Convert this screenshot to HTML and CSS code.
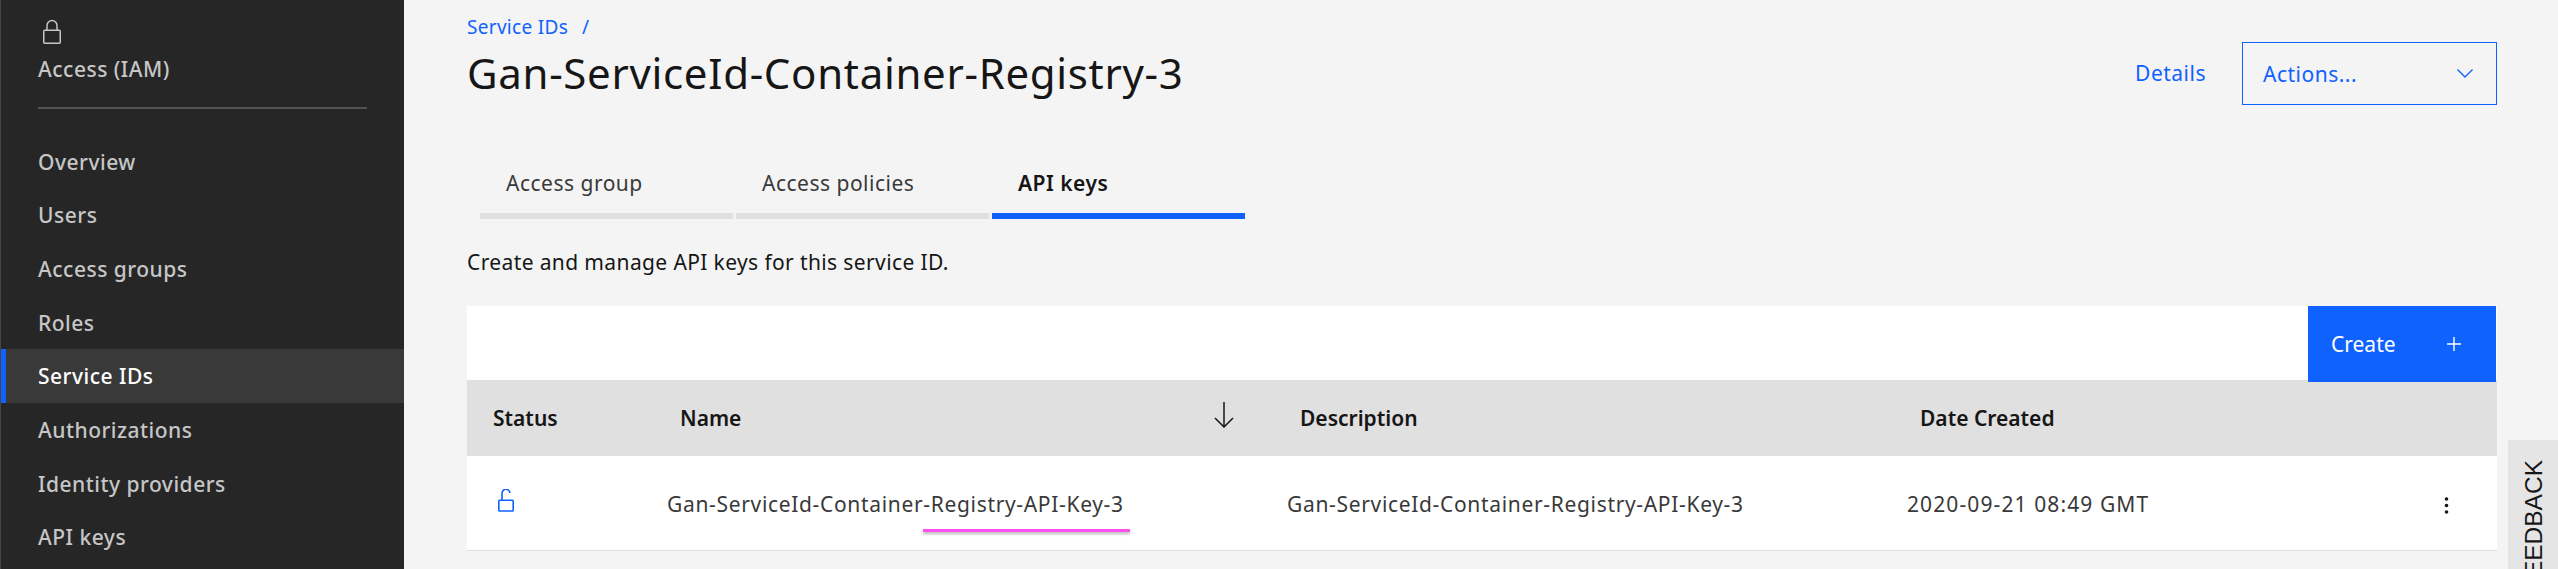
FILE: index.html
```html
<!DOCTYPE html>
<html>
<head>
	<meta charset="UTF-8">
	<title>Gan-ServiceId-Container-Registry-3</title>
	<link rel="stylesheet" href="styles.css">
</head>
<body>
<div id="page">
	<aside class="side">
		<div class="side-head">
			<svg class="side-lock" width="18" height="25" viewBox="0 0 18 25">
				<path d="M4 11V6.5a5 5 0 0 1 10 0V11" fill="none" stroke="#c6c6c6" stroke-width="1.5"/>
				<rect x="0.75" y="11.25" width="16.5" height="13" rx="1" fill="none" stroke="#c6c6c6" stroke-width="1.5"/>
			</svg>
			<div class="side-title">Access (IAM)</div>
		</div>
		<ul class="side-nav">
			<li><a href="javascript:;">Overview</a></li>
			<li><a href="javascript:;">Users</a></li>
			<li><a href="javascript:;">Access groups</a></li>
			<li><a href="javascript:;">Roles</a></li>
			<li class="select"><a href="javascript:;">Service IDs</a></li>
			<li><a href="javascript:;">Authorizations</a></li>
			<li><a href="javascript:;">Identity providers</a></li>
			<li><a href="javascript:;">API keys</a></li>
		</ul>
	</aside>

	<main class="main">
		<div class="head">
			<div class="head-left">
				<div class="crumb"><a href="javascript:;">Service IDs</a><span class="crumb-sep">/</span></div>
				<h1 class="title">Gan-ServiceId-Container-Registry-3</h1>
			</div>
			<div class="head-right">
				<a class="details" href="javascript:;">Details</a>
				<div class="actions">
					<span>Actions...</span>
					<svg width="16" height="9" viewBox="0 0 16 9"><path d="M0.5 0.5L8 8l7.5-7.5" fill="none" stroke="#0f62fe" stroke-width="1.4"/></svg>
				</div>
			</div>
		</div>

		<ul class="tabs">
			<li><a href="javascript:;">Access group</a></li>
			<li><a href="javascript:;">Access policies</a></li>
			<li class="on"><a href="javascript:;">API keys</a></li>
		</ul>

		<p class="intro">Create and manage API keys for this service ID.</p>

		<div class="toolbar">
			<a class="create" href="javascript:;">
				<span>Create</span>
				<svg width="14" height="14" viewBox="0 0 14 14"><path d="M7 0v14M0 7h14" stroke="#fff" stroke-width="1.4"/></svg>
			</a>
		</div>

		<div class="row row-head">
			<div class="cell">Status</div>
			<div class="cell cell-sort">Name
				<svg class="sort" width="20" height="26" viewBox="0 0 20 26"><path d="M10 0v25M1 16l9 9 9-9" fill="none" stroke="#161616" stroke-width="1.5"/></svg>
			</div>
			<div class="cell">Description</div>
			<div class="cell">Date Created</div>
			<div class="cell"></div>
		</div>
		<div class="row row-body">
			<div class="cell">
				<svg class="open-lock" width="16" height="23" viewBox="0 0 16 23">
					<path d="M4 11V4.5a4 4 0 0 1 8 -0.5" fill="none" stroke="#0f62fe" stroke-width="1.6"/>
					<rect x="0.8" y="11.3" width="14.4" height="10.7" rx="0.8" fill="none" stroke="#0f62fe" stroke-width="1.6"/>
				</svg>
			</div>
			<div class="cell cell-text">Gan-ServiceId-Container-Registry-API-Key-3</div>
			<div class="cell cell-text">Gan-ServiceId-Container-Registry-API-Key-3</div>
			<div class="cell cell-text cell-date">2020-09-21 08:49 GMT</div>
			<div class="cell cell-more">
				<svg width="5" height="17" viewBox="0 0 5 17"><circle cx="2.5" cy="2" r="1.8" fill="#161616"/><circle cx="2.5" cy="8.5" r="1.8" fill="#161616"/><circle cx="2.5" cy="15" r="1.8" fill="#161616"/></svg>
			</div>
		</div>
	</main>

	<div class="mark"></div>
	<div class="feedback"><span>FEEDBACK</span></div>
</div>
</body>
</html>
```

FILE: styles.css
```css
html, body{
	margin: 0;
	padding: 0;
	height: 569px;
	overflow: hidden;
}
body{
	background-color: #f4f4f4;
	color: #161616;
	font-family: "Noto Sans", "Liberation Sans", sans-serif;
}
ul{
	margin: 0;
	padding: 0;
	list-style: none;
}
a{
	text-decoration: none;
	color: inherit;
}
#page{
	position: relative;
	display: flex;
	height: 569px;
	overflow: hidden;
}

/* sidebar */
.side{
	flex: none;
	box-sizing: border-box;
	width: 404px;
	height: 569px;
	background-color: #262626;
	border-left: 1px solid #444;
	color: #c6c6c6;
	font-size: 21px;
	font-weight: 500;
	letter-spacing: 0.5px;
}
.side-head{
	box-sizing: border-box;
	height: 108.5px;
	margin: 0 37px;
	padding-top: 19px;
	border-bottom: 2px solid #525252;
}
.side-lock{
	display: block;
	margin-left: 5px;
}
.side-title{
	margin-top: 12px;
	line-height: 26px;
}
.side-nav{
	margin-top: 26px;
}
.side-nav li{
	height: 53.7px;
	line-height: 55px;
	padding-left: 37px;
}
.side-nav .select{
	padding-left: 32px;
	border-left: 5px solid #0f62fe;
	background-color: #393939;
	color: #fff;
}

/* main */
.main{
	flex: 1;
	min-width: 0;
	padding: 0 61px 0 63px;
}
.head{
	display: flex;
	justify-content: space-between;
	height: 106px;
}
.crumb{
	padding-top: 14px;
	line-height: 26px;
	font-size: 19px;
	letter-spacing: 0.3px;
	color: #0f62fe;
}
.crumb-sep{
	margin-left: 14px;
}
.title{
	margin: 6px 0 0;
	font-size: 42px;
	font-weight: 400;
	letter-spacing: 0.68px;
	line-height: 54px;
	white-space: nowrap;
}
.head-right{
	display: flex;
	align-items: flex-start;
	padding-top: 42px;
	color: #0f62fe;
	font-size: 21px;
	letter-spacing: 0.5px;
}
.details{
	margin-right: 36px;
	line-height: 63px;
}
.actions{
	display: flex;
	align-items: center;
	justify-content: space-between;
	box-sizing: border-box;
	width: 255px;
	height: 63px;
	padding: 0 23px 0 20px;
	border: 1px solid #0f62fe;
}

.tabs{
	display: flex;
	gap: 3.4px;
	margin: 53px 0 0 13px;
}
.tabs li{
	box-sizing: border-box;
	width: 252.6px;
	height: 60px;
	padding: 11px 0 0 26px;
	border-bottom: 6px solid #e0e0e0;
	font-size: 21px;
	letter-spacing: 0.5px;
	line-height: 26px;
	color: #393939;
}
.tabs .on{
	border-bottom-color: #0f62fe;
	font-weight: 600;
	color: #161616;
}
.intro{
	margin: 30px 0 0;
	font-size: 21px;
	letter-spacing: 0.38px;
	line-height: 26px;
}

.toolbar{
	display: flex;
	justify-content: flex-end;
	height: 74px;
	margin-top: 31px;
	background-color: #fff;
}
.create{
	position: relative;
	display: flex;
	align-items: center;
	justify-content: space-between;
	box-sizing: border-box;
	width: 188px;
	height: 76px;
	margin-right: 1px;
	padding: 0 35px 0 23px;
	background-color: #0f62fe;
	color: #fff;
	font-size: 21px;
}

/* table */
.row{
	display: grid;
	grid-template-columns: 187px 620px 620px 540px 1fr;
	align-items: center;
}
.row-head{
	height: 76px;
	background-color: #e0e0e0;
	font-size: 21px;
	font-weight: 600;
}
.row-head .cell{
	padding-left: 26px;
}
.cell-sort{
	position: relative;
}
.sort{
	position: absolute;
	top: -2px;
	right: 40px;
}
.row-body{
	box-sizing: border-box;
	height: 95px;
	background-color: #fff;
	border-bottom: 1px solid #e0e0e0;
	font-size: 21px;
	color: #393939;
}
.row-body .cell{
	padding-left: 13px;
	white-space: nowrap;
}
.row-body .cell:first-child{
	padding-left: 31px;
}
.cell-text{
	padding-top: 2px;
	letter-spacing: 0.67px;
}
.cell-date{
	letter-spacing: 1.1px;
}
.open-lock{
	display: block;
	margin-top: -5px;
}
.row-body .cell-more{
	padding-left: 0;
	padding-right: 48px;
	text-align: right;
}
.cell-more svg{
	display: inline-block;
	vertical-align: middle;
}

/* pink pen stroke drawn over the screenshot */
.mark{
	position: absolute;
	left: 923px;
	top: 529px;
	width: 207px;
	height: 3px;
	background-color: #ff4ff0;
	box-shadow: 0 2px 3px rgba(0, 0, 0, 0.3);
}

.feedback{
	position: absolute;
	left: 2508px;
	top: 440px;
	width: 50px;
	height: 200px;
	padding: 20px 0 0 1px;
	box-sizing: border-box;
	background-color: #e5e5e5;
	font-family: "Liberation Sans", sans-serif;
	font-size: 24.5px;
	line-height: 50px;
}
.feedback span{
	display: block;
	writing-mode: vertical-rl;
	transform: rotate(180deg);
	white-space: nowrap;
}
```
